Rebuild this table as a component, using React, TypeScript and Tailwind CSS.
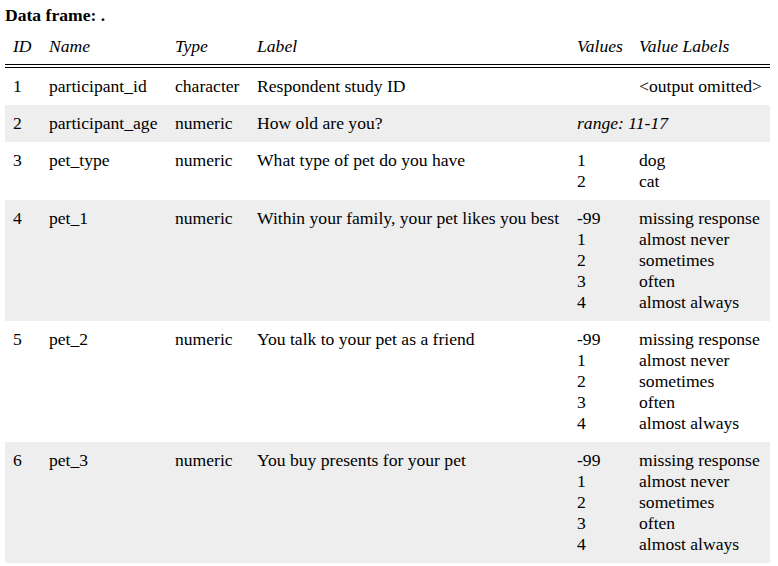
import React from "react";

type Row = {
  id: number;
  name: string;
  type: string;
  label: string;
  values?: string[];
  labels?: string[];
  range?: string;
  omitted?: boolean;
};

const scale = ["-99", "1", "2", "3", "4"];
const scaleLabels = ["missing response", "almost never", "sometimes", "often", "almost always"];

const rows: Row[] = [
  { id: 1, name: "participant_id", type: "character", label: "Respondent study ID", omitted: true },
  { id: 2, name: "participant_age", type: "numeric", label: "How old are you?", range: "range: 11-17" },
  { id: 3, name: "pet_type", type: "numeric", label: "What type of pet do you have", values: ["1", "2"], labels: ["dog", "cat"] },
  { id: 4, name: "pet_1", type: "numeric", label: "Within your family, your pet likes you best", values: scale, labels: scaleLabels },
  { id: 5, name: "pet_2", type: "numeric", label: "You talk to your pet as a friend", values: scale, labels: scaleLabels },
  { id: 6, name: "pet_3", type: "numeric", label: "You buy presents for your pet", values: scale, labels: scaleLabels },
];

const td = "px-[8px] py-[8px] align-top whitespace-nowrap";
const th = "px-[8px] pt-[8px] pb-[7px] align-top text-left font-normal italic whitespace-nowrap border-b-[4px] border-double border-black";

export default function App() {
  return (
    <div className="bg-white text-black font-['Liberation_Serif','Times_New_Roman',serif] text-[17.6px] leading-[21px] pl-[5px] w-[778px] h-[566px] overflow-hidden">
      <div className="font-bold pt-[5px] h-[28px]">Data frame: .</div>
      <table className="table-fixed border-collapse w-[765px]">
        <colgroup>
          <col className="w-[36px]" />
          <col className="w-[126px]" />
          <col className="w-[82px]" />
          <col className="w-[320px]" />
          <col className="w-[62px]" />
          <col className="w-[139px]" />
        </colgroup>
        <thead>
          <tr>
            <th className={th}>ID</th>
            <th className={th}>Name</th>
            <th className={th}>Type</th>
            <th className={th}>Label</th>
            <th className={th}>Values</th>
            <th className={th}>Value Labels</th>
          </tr>
        </thead>
        <tbody>
          {rows.map((r, i) => (
            <tr key={r.id} className={i % 2 === 1 ? "bg-[#eeeeee]" : "bg-white"}>
              <td className={td}>{r.id}</td>
              <td className={td}>{r.name}</td>
              <td className={td}>{r.type}</td>
              <td className={td}>{r.label}</td>
              {r.omitted ? (
                <>
                  <td className={td}></td>
                  <td className={td}>&lt;output omitted&gt;</td>
                </>
              ) : r.range ? (
                <td className={td + " italic"} colSpan={2}>
                  {r.range}
                </td>
              ) : (
                <>
                  <td className={td}>
                    {r.values!.map((v) => (
                      <div key={v}>{v}</div>
                    ))}
                  </td>
                  <td className={td}>
                    {r.labels!.map((v) => (
                      <div key={v}>{v}</div>
                    ))}
                  </td>
                </>
              )}
            </tr>
          ))}
        </tbody>
      </table>
    </div>
  );
}
